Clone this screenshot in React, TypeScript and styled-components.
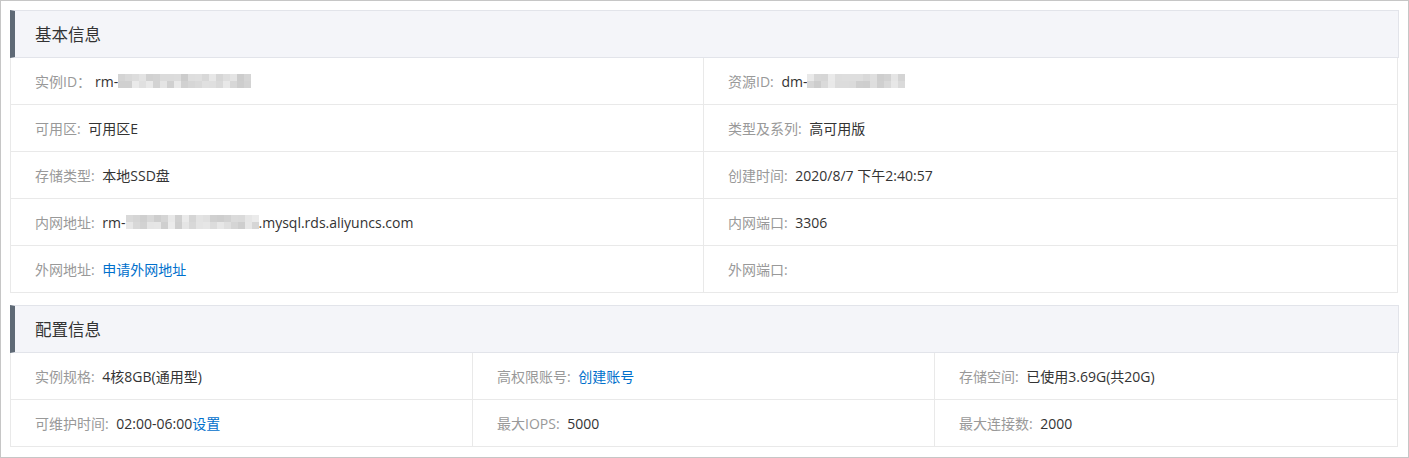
import React from 'react';
import styled, { createGlobalStyle } from 'styled-components';

const GlobalStyle = createGlobalStyle`
  html, body { margin: 0; padding: 0; background: #fff; }
  body {
    font-family: "Open Sans", "Noto Sans CJK SC", sans-serif;
    -webkit-font-smoothing: antialiased;
  }
`;

const Frame = styled.div`
  box-sizing: border-box;
  width: 1409px;
  height: 458px;
  border: 1px solid #c6c6c6;
  padding: 9px 9px 0;
  display: flex;
  flex-direction: column;
  gap: 12px;
`;

const Panel = styled.section`
  display: flex;
  flex-direction: column;
`;

const PanelHeader = styled.div`
  box-sizing: border-box;
  height: 48px;
  background: #f4f5f9;
  border: 1px solid #e2e4ea;
  border-left: 5px solid #5f6a76;
  padding-left: 20px;
  display: flex;
  align-items: center;
  font-size: 16.5px;
  color: #333;
`;

const Grid = styled.div<{ cols: number }>`
  display: grid;
  grid-template-columns: repeat(${p => p.cols}, 1fr);
  border-left: 1px solid #e9e9e9;
  border-right: 1px solid #e9e9e9;
  margin-right: 1px;
`;

const Cell = styled.div<{ last?: boolean }>`
  box-sizing: border-box;
  height: 47px;
  padding-left: 24px;
  display: flex;
  align-items: center;
  border-bottom: 1px solid #e9e9e9;
  border-right: ${p => (p.last ? 'none' : '1px solid #e9e9e9')};
  font-size: 14px;
  white-space: pre;
`;

const Label = styled.span`
  color: #999;
  margin-right: 4px;
`;

const Value = styled.span`
  color: #333;
  display: inline-flex;
  align-items: center;
`;

const Link = styled.a`
  color: #0070cc;
  text-decoration: none;
  cursor: pointer;
`;

const Mosaic = styled.span<{ cols: number }>`
  display: inline-grid;
  grid-template-columns: repeat(${p => p.cols}, 7px);
  grid-auto-rows: 7px;
`;

const Tile = styled.span<{ shade: number }>`
  background: ${p => `rgb(${p.shade}, ${p.shade}, ${p.shade})`};
`;

const Blur: React.FC<{ cols: number; seed: number }> = ({ cols, seed }) => {
  const tiles = [];
  for (let i = 0; i < cols * 2; i++) {
    const v = (Math.sin((i + 1) * 12.9898 + seed * 78.233) * 43758.5453) % 1;
    const shade = 204 + Math.floor(Math.abs(v) * 32);
    tiles.push(<Tile key={i} shade={shade} />);
  }
  return <Mosaic cols={cols}>{tiles}</Mosaic>;
};

type Item = { label: string; value: React.ReactNode };

const basic: Item[] = [
  { label: '实例ID：', value: <>rm-<Blur cols={19} seed={1} /></> },
  { label: '资源ID: ', value: <>dm-<Blur cols={14} seed={2} /></> },
  { label: '可用区: ', value: '可用区E' },
  { label: '类型及系列: ', value: '高可用版' },
  { label: '存储类型: ', value: '本地SSD盘' },
  { label: '创建时间: ', value: '2020/8/7 下午2:40:57' },
  { label: '内网地址: ', value: <>rm-<Blur cols={19} seed={3} />.mysql.rds.aliyuncs.com</> },
  { label: '内网端口: ', value: '3306' },
  { label: '外网地址: ', value: <Link>申请外网地址</Link> },
  { label: '外网端口: ', value: '' },
];

const config: Item[] = [
  { label: '实例规格: ', value: '4核8GB(通用型)' },
  { label: '高权限账号: ', value: <Link>创建账号</Link> },
  { label: '存储空间: ', value: '已使用3.69G(共20G)' },
  { label: '可维护时间: ', value: <>02:00-06:00<Link>设置</Link></> },
  { label: '最大IOPS: ', value: '5000' },
  { label: '最大连接数: ', value: '2000' },
];

const InfoPanel: React.FC<{ title: string; cols: number; items: Item[] }> = ({ title, cols, items }) => (
  <Panel>
    <PanelHeader>{title}</PanelHeader>
    <Grid cols={cols}>
      {items.map((it, i) => (
        <Cell key={i} last={(i + 1) % cols === 0}>
          <Label>{it.label}</Label>
          <Value>{it.value}</Value>
        </Cell>
      ))}
    </Grid>
  </Panel>
);

export default function App() {
  return (
    <>
      <GlobalStyle />
      <Frame>
        <InfoPanel title="基本信息" cols={2} items={basic} />
        <InfoPanel title="配置信息" cols={3} items={config} />
      </Frame>
    </>
  );
}
